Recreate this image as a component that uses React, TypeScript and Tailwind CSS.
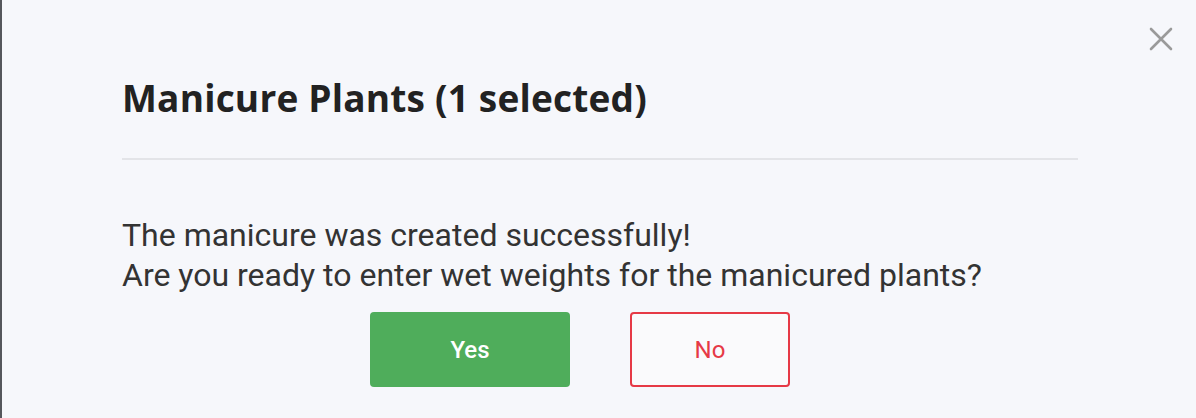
import React from 'react';

export default function App() {
    return (
        <div className="relative h-[418px] w-full overflow-hidden border-l-2 border-[#55575c] bg-[#f6f7fb]">
            <button className="absolute left-[1146px] top-[26px] flex h-[26px] w-[26px] items-center justify-center">
                <svg width="24" height="24" viewBox="0 0 24 24" fill="none" stroke="#9a9a9a" strokeWidth="2.6" strokeLinecap="round">
                    <path d="M2 2 L22 22 M22 2 L2 22" />
                </svg>
            </button>
            <main className="flex flex-col pl-[120px] pr-[118px] pt-[75px]">
                <h2 className="text-[37px] font-bold leading-[46px] tracking-[0.2px] text-[#222222] [font-family:'Open_Sans',Lato,sans-serif]">
                    Manicure Plants (1 selected)
                </h2>
                <div className="mt-[37px] h-[2px] w-full bg-[#e3e4e8]" />
                <div className="mt-[55px] text-[32px] leading-[40px] text-[#333333] [font-family:Roboto,'Liberation_Sans',sans-serif]">
                    <p>The manicure was created successfully!</p>
                    <p>Are you ready to enter wet weights for the manicured plants?</p>
                </div>
                <section className="ml-[248px] mt-[17px] flex gap-x-[60px] [font-family:Roboto,'Liberation_Sans',sans-serif]">
                    <button className="flex h-[75px] w-[200px] items-center justify-center rounded-[4px] bg-[#4fad5b] text-[24px] font-medium text-white">
                        Yes
                    </button>
                    <button className="flex h-[75px] w-[160px] items-center justify-center rounded-[4px] border-2 border-[#e63946] bg-[#fafafc] text-[24px] font-normal text-[#e63946]">
                        No
                    </button>
                </section>
            </main>
        </div>
    );
}
